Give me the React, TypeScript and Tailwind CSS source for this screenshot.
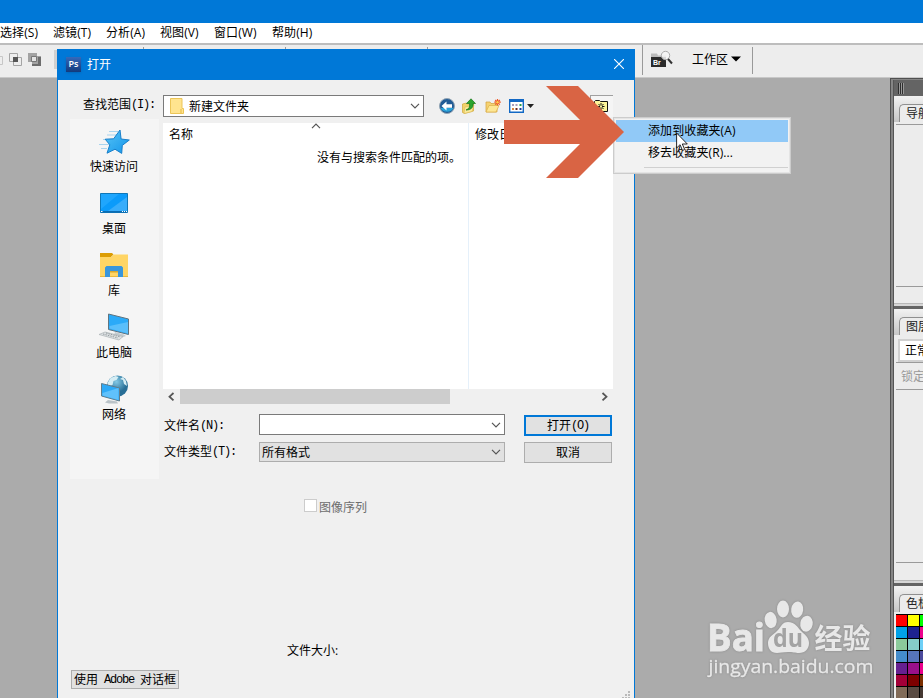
import type { ReactNode } from "react";
import { clsx } from "clsx";

const UI = "font-['Open_Sans','Noto_Sans_CJK_SC',sans-serif]";

/** Label in the old system style: 12px Chinese with half-width Latin. */
function Song({ cjk, latin, className }: { cjk: string; latin?: string; className?: string }) {
  return (
    <span className={clsx("inline-flex items-center whitespace-pre text-[12px] leading-4", className)}>
      {cjk}
      {latin && <span className="font-['Liberation_Mono',monospace] text-[12px] leading-4 tracking-[-1.2px]">{latin}</span>}
    </span>
  );
}

function Chevron({ className }: { className?: string }) {
  return (
    <svg viewBox="0 0 10 6" className={clsx("h-[6px] w-[10px] shrink-0", className)} fill="none" stroke="#555" strokeWidth="1.2">
      <path d="M1 .8 5 4.8 9 .8" />
    </svg>
  );
}

const menus = [
  { label: "选择(S)", width: "w-[53px]" },
  { label: "滤镜(T)", width: "w-[53px]" },
  { label: "分析(A)", width: "w-[54px]" },
  { label: "视图(V)", width: "w-[54px]" },
  { label: "窗口(W)", width: "w-[58px]" },
  { label: "帮助(H)", width: "w-[60px]" },
];

function MenuBar() {
  return (
    <nav className="flex h-[20px] shrink-0 items-center bg-white">
      {menus.map((m) => (
        <span key={m.label} className={clsx("shrink-0 whitespace-nowrap text-[12px] leading-5 tracking-[0.1px]", m.width)}>{m.label}</span>
      ))}
    </nav>
  );
}

function BridgeIcon() {
  return (
    <svg viewBox="0 0 24 18" className="h-[18px] w-[24px]">
      <path d="M1 3.500h6l1 2h8v3H1z" fill="#bbb" />
      <path d="M1 7h15v10H1z" fill="#2b2b2b" />
      <text x="3" y="14.500" fontSize="7" fontWeight="bold" fill="#fff" fontFamily="Liberation Sans, sans-serif">Br</text>
      <circle cx="15.500" cy="5.500" r="4.200" fill="#f5f5f5" fillOpacity=".85" stroke="#aaa" />
      <path d="m18 9 4 4.500" stroke="#333" strokeWidth="2" />
    </svg>
  );
}

function OptionsBar() {
  return (
    <div className="flex h-[35px] shrink-0 items-start border-t-2 border-b border-t-[#bdbdbd] border-b-[#c8c8c8] bg-[#ededed]">
      <svg viewBox="0 0 144 32" className="h-[32px] w-[144px] shrink-0" fill="none">
        <path d="M-6 11.500h8.500v8h-8.500" stroke="#c6c6c6" />
        <path d="M9.500 8.500h8v8h-8zM13.500 12.500h8v8h-8z" stroke="#a5a5a5" />
        <path d="M13 12h5v5h-5z" fill="#555" />
        <path d="M28 8h9v3h4v10h-9v-4h-4z" fill="#a3a3a3" />
        <path d="M38 12h3v9h-9v-2h6z" fill="#6d6d6d" />
        <path d="M31.500 11.500h5v5h-5z" fill="#e3e3e3" stroke="#777" />
        <path d="M54 5h4v19h-4z" fill="#d0d0d0" />
        <path d="M143.500 2v28" stroke="#999" />
      </svg>
      <div className="mt-[2px] ml-[141px] h-[28px] w-px bg-[#999]" />
      <div className="mt-[2px] ml-[141px] h-[28px] w-px bg-[#999]" />
      <div className="ml-[214px] h-[30px] w-px bg-[#999]" />
      <div className="mt-[5px] ml-[7px]"><BridgeIcon /></div>
      <span className="mt-[7px] ml-[18px] text-[12px] leading-4">工作区</span>
      <svg viewBox="0 0 10 6" className="mt-[11px] ml-[3px] h-[6px] w-[10px]"><path d="M0 .5h10L5 5.500z" /></svg>
      <div className="mt-[2px] ml-[11px] h-[27px] w-px bg-[#999]" />
    </div>
  );
}

function StarIcon() {
  return (
    <svg viewBox="0 0 32 32" className="size-8">
      <defs>
        <linearGradient id="star" x1="0" y1="0" x2="1" y2="1"><stop stopColor="#58c4f6" /><stop offset="1" stopColor="#1295ea" /></linearGradient>
      </defs>
      <path d="M11 5.500h9M9 9h12M5 13.500h6M1 18.500h10M3 22.500h6" stroke="#a9d4ee" strokeWidth="1.200" />
      <path d="m22 4 1.100 9 8.200 1-7 5.400-.6 8-6.700-4.200-8 4 2.800-8.400-4.600-5.600 8.400-.4z" fill="url(#star)" stroke="#187fca" />
    </svg>
  );
}

function DesktopIcon() {
  return (
    <svg viewBox="0 0 32 32" className="size-8">
      <path d="M2.500 5.500h27v19h-27z" fill="#0b9bfa" stroke="#0f77b8" />
      <path d="M3 6h18L3 21z" fill="#1fa6fd" />
      <path d="M10 23 29 9v14z" fill="#38adfb" />
      <path d="M3 23h26v1.500H3z" fill="#0a6cb3" />
      <path d="M3 23.500h1.500m19.500 0h1m1 0h1m1 0h1" stroke="#fff" />
    </svg>
  );
}

function LibraryIcon() {
  return (
    <svg viewBox="0 0 32 32" className="size-8">
      <path d="M2 3h12l1.500 1.500L13 7H2z" fill="#dc9d04" />
      <path d="M2 7h11l3-2.500h14V27H2z" fill="#ffd565" />
      <path d="M2 26h28v1H2z" fill="#e9b83d" />
      <path d="M7 27V17.500L8.500 16h15l1.500 1.500V27h-5v-6h-8v6z" fill="#3996dc" />
      <path d="M12 21h8v1.500h-8z" fill="#d9a72c" />
    </svg>
  );
}

function ComputerIcon() {
  return (
    <svg viewBox="0 0 32 32" className="size-8">
      <path d="m17 20 9 2.500 2 1.500-4 1.500-8-2z" fill="#c4ccd1" />
      <path d="m10.500 2 20 5v15.500l-20-5z" fill="#2baaf8" stroke="#5f7480" />
      <path d="M11.500 14 30 10v11.500l-18.500-5z" fill="#5abffb" />
      <path d="m1 22.500 6-2.500 18 4.500-4 3.500z" fill="#dde1e3" stroke="#abb1b4" strokeWidth=".7" />
      <path d="m5 22 15 4M8 21l14 3.800" stroke="#969da1" strokeDasharray="1.500 1" />
    </svg>
  );
}

function NetworkIcon() {
  return (
    <svg viewBox="0 0 32 32" className="size-8">
      <defs>
        <radialGradient id="globe" cx=".45" cy=".3"><stop stopColor="#83c9e5" /><stop offset="1" stopColor="#286e96" /></radialGradient>
      </defs>
      <circle cx="19.500" cy="12" r="10.500" fill="url(#globe)" />
      <path d="m9.500 9 3-5 5-2 3 1-2 3-3 1-1 4-4 2zM25 3l3 4 1 5-3-2-1-4-3-1z" fill="#d5edf4" />
      <path d="m10 26 9 1.500 1 2H11l-4-1z" fill="#bac3c8" />
      <path d="m3.500 9.500 18 4.500v13l-18-5z" fill="#2da9f6" stroke="#607d8c" />
      <path d="m4.500 19 16-5v12l-16-4.500z" fill="#60c1fb" />
    </svg>
  );
}

const places: { label: string; icon: ReactNode }[] = [
  { label: "快速访问", icon: <StarIcon /> },
  { label: "桌面", icon: <DesktopIcon /> },
  { label: "库", icon: <LibraryIcon /> },
  { label: "此电脑", icon: <ComputerIcon /> },
  { label: "网络", icon: <NetworkIcon /> },
];

function FolderTools() {
  return (
    <div className="ml-[14px] flex items-center">
      <svg viewBox="0 0 18 18" className="size-[18px]">
        <circle cx="9" cy="9" r="7.500" fill="#225c96" stroke="#92a4b3" />
        <path d="M2.500 11a7 6 0 0 0 13 0z" fill="#2ba2d8" />
        <path d="m3.500 9 5-4.500v2.800H14v3.400H8.500v2.800z" fill="#fff" />
      </svg>
      <svg viewBox="0 0 16 16" className="ml-[5px] size-4">
        <path d="m1.500 6 4-1 1 1 6-1v8l-9 2.500-2-1z" fill="#f1d36b" stroke="#d0a639" strokeWidth=".7" />
        <path d="m4 9 9-2-2 6.500L3 15.500z" fill="#fbe99b" stroke="#d8b44c" strokeWidth=".5" />
        <path d="M5 12c3-1 4-3 3.500-6.500H5.500L10 .8l4.500 4.700H12c.5 4-2 6.500-7 6.500z" fill="#2ba52e" stroke="#147419" strokeWidth=".7" />
      </svg>
      <svg viewBox="0 0 17 16" className="ml-[8px] h-[16px] w-[17px]">
        <path d="M1 4h4l1 1.500h6V14H1z" fill="#f5d272" stroke="#d2a13a" strokeWidth=".7" />
        <path d="m1 14 3-6.500h10L11 14z" fill="#fde795" stroke="#dcb048" strokeWidth=".7" />
        <path d="M12.500 1v6.500M9.300 4.200h6.500M10.200 2l4.600 4.600M14.800 2l-4.600 4.600" stroke="#ef5726" strokeWidth="1.200" />
        <circle cx="12.500" cy="4.200" r="1.200" fill="#ffd04b" />
      </svg>
      <svg viewBox="0 0 26 16" className="ml-[7px] h-[16px] w-[26px]">
        <path d="M.7 1.700h13.600v12.600H.7z" fill="#fff" stroke="#1268c4" strokeWidth="1.400" />
        <path d="M0 1h15v3H0z" fill="#1268c4" />
        <path d="M3 6h2v2H3zM6.500 6h2v2h-2z" fill="#a79dbc" />
        <path d="M10.500 6h2v2h-2z" fill="#299e4b" />
        <path d="M3 10h2v2H3z" fill="#db873f" />
        <path d="M6.500 10h2v2h-2z" fill="#6d2b25" />
        <path d="M10.500 10h2v2h-2z" fill="#193a98" />
        <path d="M18 6h7l-3.500 4z" fill="#222" />
      </svg>
    </div>
  );
}

function FavoritesButton() {
  return (
    <div className="ml-auto flex h-[22px] w-[23px] items-start border-t border-l border-[#a0a0a0] bg-[#f5f5f5] pt-[3px] pl-[2px]">
      <svg viewBox="0 0 16 14" className="h-[14px] w-[16px]">
        <path d="M1.500 12.500v-10l1-1h4l1 1h7v10z" fill="#fbf49a" stroke="#111" />
        <path d="M8 4v7M4.500 7.500h7M5.500 5l5 5M10.500 5l-5 5" stroke="#111" />
        <path d="M7 6.500h2v2H7z" fill="#fbf49a" />
      </svg>
    </div>
  );
}

function FileList() {
  return (
    <div className="w-[450px]">
      <div className="flex h-[266px] bg-white text-[12px] leading-4">
        <div className="w-[306px] border-r border-[#e5f0fa]">
          <div className="flex h-[24px] items-start pt-[4px] pl-[6px]">
            <span className="w-[142px]">名称</span>
            <Chevron className="-mt-[4px] rotate-180" />
          </div>
          <p className="ml-[154px] whitespace-nowrap pt-[3px]">没有与搜索条件匹配的项。</p>
        </div>
        <span className="pt-[4px] pl-[6px]">修改日期</span>
      </div>
      <div className="flex h-[15px] items-center">
        <svg viewBox="0 0 17 15" className="h-[15px] w-[17px]" fill="none" stroke="#555" strokeWidth="1.800"><path d="m10.500 4-4 3.700 4 3.700" /></svg>
        <div className="h-[15px] w-[270px] bg-[#cdcdcd]" />
        <svg viewBox="0 0 17 15" className="ml-auto h-[15px] w-[17px]" fill="none" stroke="#555" strokeWidth="1.800"><path d="m6.500 4 4 3.700-4 3.700" /></svg>
      </div>
    </div>
  );
}

function OpenDialog() {
  return (
    <section className="absolute top-[49px] left-[57px] flex h-[660px] w-[578px] flex-col border border-[#0078d7] bg-[#f0f0f0]">
      <header className="flex h-[30px] shrink-0 items-center bg-[#0078d7] pr-[10px] pb-[2px] pl-[8px] text-white">
        <div className="grid size-[15px] place-items-center bg-linear-to-b from-[#3569ba] to-[#123a7d] pb-[2px] text-[9px] leading-none font-semibold shadow-sm">Ps</div>
        <h1 className="ml-[6px] pt-[2px] text-[12px] leading-4">打开</h1>
        <svg viewBox="0 0 10 10" className="ml-auto size-[10px]" stroke="#fff" strokeWidth="1.100"><path d="m0 0 10 10M10 0 0 10" /></svg>
      </header>

      <div className="mt-[15px] mr-[21px] ml-[25px] flex h-[22px] shrink-0">
        <Song cjk="查找范围" latin="(I):" className="-mt-[2px] w-[80px]" />
        <div className="flex w-[261px] items-center border border-[#7a7a7a] bg-white pr-[3px] pl-[6px]">
          <svg viewBox="0 0 14 16" className="h-[16px] w-[14px]">
            <path d="M.5.500h11.500v10h1.500v5H.5z" fill="#ffe48f" stroke="#ecc557" />
            <path d="M11 11v4" stroke="#e5b742" />
          </svg>
          <span className="ml-[5px] pt-px text-[12px] leading-4">新建文件夹</span>
          <Chevron className="ml-auto" />
        </div>
        <FolderTools />
        <FavoritesButton />
      </div>

      <div className="flex">
        <aside className="mt-[2px] ml-[12px] flex h-[360px] w-[89px] shrink-0 flex-col items-center bg-[#f5f5f5] pt-[7px] pr-[1px]">
          {places.map((p) => (
            <div key={p.label} className="flex h-[62px] w-full flex-col items-center">
              {p.icon}
              <span className="mt-px text-[12px] leading-4">{p.label}</span>
            </div>
          ))}
        </aside>

        <div className="mt-[6px] ml-[4px] w-[450px]">
          <FileList />
          <div className="mt-[10px] flex h-[21px] items-center">
            <Song cjk="文件名" latin="(N):" className="w-[96px] pt-[2px] pl-[1px]" />
            <div className="flex h-[21px] w-[246px] items-center justify-end border border-[#7a7a7a] bg-white pr-[3px]"><Chevron /></div>
            <button className="relative top-px ml-[19px] flex h-[21px] w-[88px] items-center justify-center border-2 border-[#0078d7] bg-[#e1e1e1]"><Song cjk="打开" latin="(O)" /></button>
          </div>
          <div className="mt-[7px] flex h-[21px] items-start">
            <Song cjk="文件类型" latin="(T):" className="w-[96px] pt-[2px] pl-[1px]" />
            <div className="flex h-[20px] w-[246px] items-center justify-between border border-[#adadad] bg-[#e1e1e1] pr-[3px] pl-[2px]"><Song cjk="所有格式" className="pt-px" /><Chevron /></div>
            <button className="ml-[19px] flex h-[21px] w-[88px] items-center justify-center border border-[#adadad] bg-[#e1e1e1]"><Song cjk="取消" /></button>
          </div>
          <div className="mt-[35px] ml-[141px] flex h-[18px] items-start text-[#6d6d6d]">
            <span className="mt-px size-[13px] border border-[#ccc] bg-white" />
            <Song cjk="图像序列" className="ml-[2px] pt-[2px]" />
          </div>
        </div>
      </div>

      <Song cjk="文件大小:" className="mt-[127px] ml-[229px]" />
      <div className="mt-[11px] flex items-end justify-between pl-[13px]">
        <button className="flex h-[19px] w-[108px] items-center justify-center border border-[#adadad] bg-[#e1e1e1]">
          <Song cjk="使用" latin=" Adobe " />
          <Song cjk="对话框" />
        </button>
        <svg viewBox="0 0 10 8" className="relative top-[10px] right-[3px] h-[8px] w-[10px]" fill="#bababa">
          <path d="M7 0h2v2H7zM4 3h2v2H4zM7 3h2v2H7zM1 6h2v2H1zM4 6h2v2H4zM7 6h2v2H7z" />
        </svg>
      </div>
    </section>
  );
}

function PanelTab({ label }: { label: string }) {
  return (
    <div className="flex h-[26px] shrink-0 items-end rounded-tl-[3px] bg-linear-to-b from-[#f2f2f2] to-[#c6c6c6] pl-[5px]">
      <div className="h-[18px] w-[40px] rounded-tl-[5px] border-t border-l border-[#8f8f8f] bg-[#ececec] pl-[6px] text-[12px] leading-[18px] whitespace-nowrap text-[#222]">{label}</div>
    </div>
  );
}

const swatches = [
  ["#ff0000", "#ffff00", "#00ff00"],
  ["#00a2e8", "#1e2390", "#ec008c"],
  ["#8bca9b", "#85ccc9", "#6dcff6"],
  ["#448ccb", "#5674b9", "#4b4a9d"],
  ["#662090", "#99108a", "#ec008c"],
  ["#a30038", "#7d0000", "#7b2e00"],
  ["#816b58", "#594a42", "#453832"],
];

function PanelDock() {
  return (
    <aside className="ml-auto flex h-full w-[33px] flex-col overflow-hidden border-t border-l border-[#505050] bg-[#646464]">
      <div className="flex min-h-0 flex-1 border-t border-l-2 border-[#858585]">
        <div className="w-px shrink-0 bg-[#555]" />
        <div className="flex w-[40px] shrink-0 flex-col">
          <div className="flex h-[16px] shrink-0 items-center gap-px pl-[4px]">
            {[0, 1, 2].map((i) => <span key={i} className="h-[11px] w-px bg-[#2e2e2e] shadow-[1px_0_#999]" />)}
          </div>
          <div className="flex h-[210px] shrink-0 flex-col bg-[#ececec]">
            <PanelTab label="导航器" />
            <div className="mx-[2px] mt-[2px] h-[163px] border-y border-[#9a9a9a]" />
            <div className="mt-auto h-[3px] border-t border-[#b8b8b8] bg-[#d6d6d6]" />
          </div>
          <div className="mt-[3px] flex h-[274px] shrink-0 flex-col bg-[#ececec]">
            <PanelTab label="图层" />
            <div className="mt-[4px] ml-[4px] h-[23px] w-[50px] shrink-0 border-2 border-[#d0d0d0] bg-white pl-[5px] text-[12px] leading-[20px]">正常</div>
            <div className="ml-[2px] flex h-[28px] shrink-0 items-center border-y border-[#9a9a9a] pt-[2px] pl-[5px] text-[12px] whitespace-nowrap text-[#999]">锁定:</div>
            <div className="mt-[172px] ml-[2px] h-px shrink-0 bg-[#9a9a9a]" />
            <div className="mt-auto h-[3px] border-t border-[#b8b8b8] bg-[#d6d6d6]" />
          </div>
          <div className="mt-[3px] flex flex-1 flex-col bg-[#ececec]">
            <PanelTab label="色板" />
            <div className="mt-[2px] ml-[2px] flex flex-col gap-px border-t border-black bg-black">
              {swatches.map((row, i) => (
                <div key={i} className="flex h-[11px] gap-px">
                  {row.map((c, j) => <span key={j} className="w-[11px]" style={{ backgroundColor: c }} />)}
                </div>
              ))}
            </div>
          </div>
        </div>
      </div>
    </aside>
  );
}

function ContextMenu() {
  return (
    <div className="absolute top-[117px] left-[613px] h-[57px] w-[178px] border border-[#ccc] bg-[#f2f2f2] p-[2px] text-[12px] leading-[22px] tracking-[0.1px] shadow-[inset_0_0_0_1px_#e4e4e4]">
      <div className="h-[22px] bg-[#91c9f7] pl-[32px]">添加到收藏夹(A)</div>
      <div className="h-[22px] pl-[32px]">移去收藏夹(R)...</div>
      <div className="mt-[3px] ml-[28px] h-px bg-[#d0d0d0]" />
    </div>
  );
}

function Watermark() {
  return (
    <svg viewBox="0 0 170 80" className="absolute top-[598px] left-[706px] h-[80px] w-[170px] drop-shadow-[0_0_1px_#888]" fill="#e8e8e8">
      <text x="1" y="53" fontSize="37" fontWeight="bold" fontFamily="Open Sans, sans-serif" textLength="58" lengthAdjust="spacingAndGlyphs" stroke="#e8e8e8" strokeWidth=".8">Bai</text>
      <ellipse cx="64.700" cy="22" rx="6" ry="8.200" transform="rotate(-8 64.700 22)" />
      <ellipse cx="77" cy="11" rx="6" ry="8.500" />
      <ellipse cx="91.200" cy="11.700" rx="6" ry="8.200" transform="rotate(8 91.200 11.700)" />
      <ellipse cx="100.500" cy="25.700" rx="6.200" ry="8" transform="rotate(10 100.500 25.700)" />
      <path d="M82 24c6 0 9 4 12 8 4 4 9 7 9 13s-4 10-10 10c-4 0-6-1-11-1s-8 1-11 1c-6 0-9-4-9-10s5-8 9-12 5-9 11-9z" />
      <text x="67" y="49" fontSize="25" fontWeight="bold" fontFamily="Open Sans, sans-serif" fill="#a3a3a3" textLength="30" lengthAdjust="spacingAndGlyphs">du</text>
      <text x="108.500" y="51" fontSize="28" fontWeight="bold" fontFamily="Noto Sans CJK SC, sans-serif">经验</text>
      <text x="2.500" y="75" fontSize="19" fontFamily="Open Sans, sans-serif" textLength="165" lengthAdjust="spacingAndGlyphs" stroke="#e8e8e8" strokeWidth=".3">jingyan.baidu.com</text>
    </svg>
  );
}

export default function App() {
  return (
    <div className={clsx("relative flex h-[698px] w-[923px] flex-col overflow-hidden bg-[#ababab] text-black", UI)}>
      <div className="h-[23px] shrink-0 bg-[#0078d7]" />
      <MenuBar />
      <OptionsBar />
      <main className="flex min-h-0 flex-1"><PanelDock /></main>
      <OpenDialog />
      <ContextMenu />
      <svg viewBox="0 0 120 92" className="absolute top-[86px] left-[504px] h-[92px] w-[120px]" fill="#d96444">
        <path d="M42 0h32l46 46-46 46H42l34-34H0V34h76z" />
      </svg>
      <svg viewBox="0 0 13 20" className="absolute top-[132px] left-[676px] h-[20px] w-[13px]">
        <path d="M.6 1v15l3.500-3.300 2.400 5.800 2.200-1-2.400-5.500h5z" fill="#fff" stroke="#111" strokeWidth=".9" />
      </svg>
      <Watermark />
    </div>
  );
}
